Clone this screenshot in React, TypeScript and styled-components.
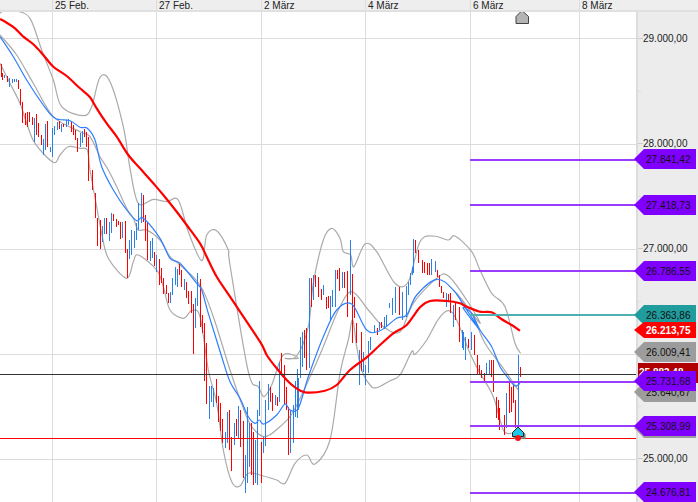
import * as React from 'react'
import styled, { createGlobalStyle } from 'styled-components'

const GlobalStyle = createGlobalStyle`
  html, body {
    margin: 0;
    background: #fff;
    overflow: hidden;
  }
`

const SPage = styled.div`
  width: 698px;
  height: 502px;
  display: flex;
  flex-direction: column;
  overflow: hidden;
  font-family: 'Liberation Sans', Arial, sans-serif;
  font-size: 10px;
  color: #222;
`
const SDateBar = styled.div`
  height: 10px;
  flex: none;
  display: flex;
  padding-left: 52px;
  background: #eee;
  border-bottom: 2px solid #e0e0e0;
  overflow: hidden;
`
const SDate = styled.div<{ $width: number }>`
  width: ${(p) => p.$width}px;
  flex: none;
  box-sizing: border-box;
  padding-left: 2px;
  line-height: 11px;
  border-left: 1px solid #ddd;
  white-space: nowrap;
`
const SBody = styled.div`
  flex: 1;
  display: flex;
  min-height: 0;
`
const SPlot = styled.div`
  width: 636px;
  flex: none;
`
const SChart = styled.svg`
  display: block;
`
const SAxis = styled.div`
  position: relative;
  flex: 1;
  box-sizing: border-box;
  padding-top: 22px;
  background: #ececec;
  border-left: 2px solid #dcdcdc;
`
const SAxisRow = styled.div`
  position: relative;
  height: 105px;
  padding-left: 5px;
  line-height: 10px;
  &::before {
    content: '';
    position: absolute;
    left: 0;
    top: 4px;
    width: 5px;
    height: 1px;
    background: #ccc;
  }
  &::after {
    content: '';
    position: absolute;
    left: 0;
    top: 57px;
    width: 3px;
    height: 1px;
    background: #ddd;
  }
`
const STag = styled.div<{ $top: number; $height: number; $bg: string; $light?: boolean }>`
  position: absolute;
  right: 2px;
  top: ${(p) => p.$top}px;
  width: 62px;
  height: ${(p) => p.$height}px;
  line-height: ${(p) => p.$height + 1}px;
  box-sizing: border-box;
  padding-left: 12px;
  background: ${(p) => p.$bg};
  clip-path: polygon(0 50%, 10px 0, 100% 0, 100% 100%, 10px 100%);
  color: ${(p) => (p.$light ? '#fff' : '#111')};
  font-weight: ${(p) => (p.$light ? 'bold' : 'normal')};
  white-space: nowrap;
`
const SCurrent = styled.div`
  position: absolute;
  left: 0;
  right: 0;
  top: 351px;
  height: 20px;
  line-height: 20px;
  padding-left: 1px;
  background: #b00000;
  color: #fff;
  font-weight: bold;
  white-space: nowrap;
`

// traced from the picture at 3x, so every series says which crop origin it uses
type Crop = [number, number, string]

const toPoints = ([ox, oy, s]: Crop) =>
  s
    .trim()
    .split(/\s+/)
    .map((p) => {
      const [x, y] = p.split(',').map(Number)
      return [x / 3 + ox, y / 3 + oy]
    })

const smooth = (crops: Crop[]) => {
  const pts = crops.flatMap(toPoints)
  let d = `M${pts[0][0]},${pts[0][1]}`
  for (let i = 0; i < pts.length - 1; i++) {
    const a = pts[Math.max(i - 1, 0)]
    const b = pts[i]
    const c = pts[i + 1]
    const e = pts[Math.min(i + 2, pts.length - 1)]
    const c1 = [b[0] + (c[0] - a[0]) / 6, b[1] + (c[1] - a[1]) / 6]
    const c2 = [c[0] - (e[0] - b[0]) / 6, c[1] - (e[1] - b[1]) / 6]
    d += `C${c1[0].toFixed(1)},${c1[1].toFixed(1)} ${c2[0].toFixed(1)},${c2[1].toFixed(1)} ${c[0].toFixed(1)},${c[1].toFixed(1)}`
  }
  return d
}

const barCrops: Crop[] = [
  [0, 0, 'r2,192,232 r7,218,240 b13,225,235 r20,228,245 b27,235,262 b35,238,248 b42,238,247 b49,236,245 r55,240,268 r61,268,315 r67,306,370 r74,340,375 r80,335,382 r88,335,365 r96,350,375 b103,355,425 r109,342,405 r115,370,410 r124,405,435 b130,418,465 b136,372,450 r142,362,440 b149,440,455 b155,385,472 b163,378,405 b171,365,390 r177,362,388 b183,372,395 r190,372,382 b199,360,380 b205,357,375 r212,362,395 r219,375,405 r226,390,420 r232,415,455 b240,400,440 b246,392,428 r253,388,410 r259,395,442 r265,410,510'],
  [0, 170, 'r265,0,33 r275,0,60 r286,70,145 r292,145,228 r301,150,237 b307,168,215 b313,145,192 r319,145,192 b328,157,212 b334,130,190 r340,133,152 r349,148,170 r355,153,165 r361,155,207 b367,157,205 r376,153,248 r382,238,325 b388,210,267 b394,180,255 b403,182,233 b409,160,210 b415,100,180 b424,70,158 r430,75,155 r436,135,212 r442,155,270 b451,212,272 b457,205,263 r463,245,287 b469,255,305 r478,267,345 r484,295,340 r490,325,372 r499,345,372 r505,370,398 b511,365,400 b517,325,375 b526,292,345 b532,297,350 r538,282,315 r544,300,350 b553,328,360 r559,337,383 r565,362,402 r574,363,430 r580,403,510 b586,385,475 b592,310,408 r601,327,470 r607,435,490 r613,460,510'],
  [180, 330, 'r40,0,72 r73,0,152 r79,40,222 b88,168,267 b94,168,215 b100,175,230 r109,148,220 r115,198,275 r121,218,302 r127,268,338 b136,305,355 b142,245,340 r148,240,360 r154,322,423 b163,278,345 r169,268,318 b175,228,325 r181,240,350 r190,272,445 b196,375,488 b202,232,458 b208,278,410 r214,280,435 r220,305,465 b226,330,458 b232,240,465 b238,153,258 r244,335,458 b250,320,370 b256,210,348 b265,162,240 r271,170,215 r277,190,242 b286,195,225 r292,200,228 b298,95,215 r304,70,130 r313,105,222 r319,170,240 r325,230,375 b331,240,370 b340,225,340 b346,153,260 b352,118,265'],
  [280, 220, 'b55,475,570 b61,350,475 b67,335,440 r73,330,415 r79,325,450 b88,175,445 r94,175,260 b100,165,240 r106,165,200 r115,172,230 r122,207,240 b128,195,225 r137,232,268 r143,228,265 b149,228,302 b155,210,260 b164,150,262 r170,150,178 r176,145,212 b185,155,205 r191,155,205 r201,152,292 b211,60,225 r217,162,370 r223,230,295 r229,310,370 b238,390,495 r244,335,453 b250,395,455 b256,435,495 b265,362,460 b271,352,390 b283,315,340 r292,325,345 b298,305,330 r304,305,325 b313,290,328 b319,285,320 b328,248,265 b337,235,285 b346,200,280 r358,200,285 b367,215,300 b379,198,290 b385,185,225 b391,160,195 b397,140,165 b400,58,160 r406,60,100 r415,90,130 r425,120,160 r431,125,160 r440,130,165 r446,130,165 b452,118,165 b464,122,155 r470,150,170 r476,165,200 r482,198,220'],
  [440, 280, 'r10,35,55 b17,40,80 r24,42,65 r29,40,100 b38,75,140 r46,70,120 r56,80,185 b65,150,205 b70,155,210 b76,170,240 r85,178,205 b93,155,210 r102,165,225 r112,225,285 r118,255,285 r124,270,295 r133,280,305 b139,250,285 b148,240,285 r154,240,290 r160,240,335 r167,350,415 r173,360,420 r178,385,450 r192,405,465 b199,340,445 r208,310,400 r214,320,395 r220,315,370 r226,360,445 b235,225,445 r241,260,292'],
]

const bars = barCrops.flatMap(([ox, oy, s]) =>
  s.split(' ').map((t) => {
    const [x, y1, y2] = t.slice(1).split(',').map(Number)
    return { color: t[0] === 'r' ? '#ff0000' : '#2a80e4', x: Math.round(x / 3 + ox) + 0.5, y1: y1 / 3 + oy, y2: y2 / 3 + oy }
  })
)

const redAverage = smooth([
  [0, 0, '0,57 20,68 45,85 70,110 100,133 130,165 160,200 200,228 240,265 270,292 290,325 320,370 350,410 385,465 420,505'],
  [0, 170, '460,40 490,75 530,125 560,165 600,220 620,260 650,320 690,380'],
  [180, 330, '240,35 260,75 290,115 320,150 345,172 375,187 435,182 470,165 510,120'],
  [280, 220, '260,412 300,375 340,340 380,315 420,262 450,243 500,243 540,250'],
  [440, 280, '80,80 120,95 155,97 185,118 215,135 240,152'],
])
const blueAverage = smooth([
  [0, 0, '0,110 40,170 80,240 130,315 165,355 210,362 240,382 262,385 285,420 305,500'],
  [0, 170, '340,60 380,120 410,152 430,145 480,205 510,265 540,280 590,340 605,360 625,430'],
  [180, 330, '125,80 150,155 180,205 205,260 225,280 238,270 252,282 290,255 315,222 330,240 355,235'],
  [280, 220, '85,470 130,350 170,270 215,252 260,330 300,332 350,295 380,285 410,225 470,178 520,210 560,270 600,330'],
  [440, 280, '70,85 95,100 120,150 155,200 180,260 205,295 225,318 240,310'],
])
const bandUpper = smooth([
  [0, 0, '0,40 15,30 50,33 90,55 125,150 160,240 185,320 250,347 275,320 300,232 330,245 370,380 390,505'],
  [0, 170, '415,100 460,88 500,95 535,90 565,185 605,272 620,195 650,182 685,240 690,285'],
  [180, 330, '205,125 235,170 252,200 275,165 310,75 355,85'],
  [280, 220, '15,415 50,408 85,320 100,190 130,60 155,25 180,55 190,95 212,105 222,140 255,72 290,95 345,190 385,185 420,65 460,48 505,60 525,48 575,95 600,150'],
  [440, 280, '155,40 195,80 225,190 242,220'],
])
const bandMiddle = smooth([
  [0, 0, '0,105 50,165 100,250 160,350 240,395 270,410 300,470 325,510'],
  [0, 170, '350,50 380,115 400,145 415,180 440,180 480,210 510,260 540,285 600,345 640,440'],
  [180, 330, '150,120 190,235 215,290 255,320 300,290 340,245'],
  [280, 220, '95,460 130,380 175,270 215,215 265,270 310,320 360,335 400,250 470,175 505,168 560,240 600,310'],
  [440, 280, '50,40 95,100 135,190 190,265 235,330'],
])
const bandLower = smooth([
  [0, 0, '0,190 30,250 60,310 80,370 105,430 160,487 180,465 205,440 240,445 262,450 270,510'],
  [0, 170, '290,110 305,190 325,265 380,325 400,275 415,255 470,300 490,350 510,420 550,445 575,422 600,440'],
  [180, 330, '85,120 110,220 130,360 155,455 180,468 205,430 250,438 290,450 315,460 345,400 380,375 405,402 450,330 480,130'],
  [280, 220, '205,360 218,300 230,380 245,450 270,495 290,503 330,482 360,465 395,395 405,403 440,360 475,298 505,272 530,300 570,400 600,460'],
  [460, 300, '60,220 100,290 130,390 155,400'],
])

const dates = [
  { label: '25 Feb.', width: 104 },
  { label: '27 Feb.', width: 105 },
  { label: '2 März', width: 104 },
  { label: '4 März', width: 105 },
  { label: '6 März', width: 109 },
  { label: '8 März', width: 119 },
]
const gridX = [52, 156, 261, 365, 470, 579]
const gridY = [38, 144, 249, 354, 459]
const levels = [
  { y: 160, color: '#9a3cff' },
  { y: 205, color: '#9a3cff' },
  { y: 271, color: '#9a3cff' },
  { y: 315, color: '#50b0b0' },
  { y: 382, color: '#9a3cff' },
  { y: 426, color: '#9a3cff' },
  { y: 493, color: '#9a3cff' },
]
const scale = ['29.000,00', '28.000,00', '27.000,00', '26.000,00', '25.000,00']
const tags = [
  { label: '27.841,42', top: 137, height: 20, bg: '#8000ff' },
  { label: '27.418,73', top: 183, height: 20, bg: '#8000ff' },
  { label: '26.786,55', top: 249, height: 20, bg: '#8000ff' },
  { label: '26.363,86', top: 293, height: 20, bg: '#209c9c' },
  { label: '26.213,75', top: 310, height: 16, bg: '#ff0000', light: true },
  { label: '26.009,41', top: 330, height: 20, bg: '#9c9c9c' },
]
const lowerTags = [
  { label: '25.640,67', top: 370, height: 20, bg: '#9c9c9c' },
  { label: '25.731,68', top: 359, height: 20, bg: '#8000ff' },
  { label: '', top: 406, height: 20, bg: '#9c9c9c' },
  { label: '25.308,99', top: 404, height: 20, bg: '#8000ff' },
  { label: '24.676,81', top: 470, height: 20, bg: '#8000ff' },
]

const PriceChart = () => (
  <SChart width={636} height={490} viewBox="0 12 636 490">
    <g shapeRendering="crispEdges" strokeWidth={1}>
      {gridX.map((x) => (
        <line key={x} x1={x + 0.5} x2={x + 0.5} y1={12} y2={502} stroke="#dcdcdc" />
      ))}
      {gridY.map((y) => (
        <line key={y} x1={0} x2={636} y1={y + 0.5} y2={y + 0.5} stroke="#dcdcdc" />
      ))}
    </g>
    <g fill="none" stroke="#aaaaaa" strokeWidth={1.2}>
      <path d={bandUpper} />
      <path d={bandMiddle} />
      <path d={bandLower} />
    </g>
    <g shapeRendering="crispEdges" strokeWidth={1}>
      {bars.map((b, i) => (
        <line key={i} x1={b.x} x2={b.x} y1={b.y1} y2={b.y2} stroke={b.color} />
      ))}
    </g>
    <path d={blueAverage} fill="none" stroke="#2f7fff" strokeWidth={1.2} />
    <path d={redAverage} fill="none" stroke="#ff0000" strokeWidth={2.2} />
    <g shapeRendering="crispEdges">
      <line x1={0} x2={636} y1={374.5} y2={374.5} stroke="#333" />
      <line x1={0} x2={636} y1={438.5} y2={438.5} stroke="#ff0000" />
      {levels.map((l) => (
        <line key={l.y} x1={470} x2={636} y1={l.y} y2={l.y} stroke={l.color} strokeWidth={2} />
      ))}
    </g>
    <path d="M522 10.5 L528.5 16.5 V23.5 H516 V16.5 Z" fill="#b4b4b4" stroke="#444" />
    <path d="M518.5 427.5 L524 433 V437.5 H513 V433 Z" fill="#9a9a9a" stroke="#777" transform="translate(1 1)" />
    <path d="M518 427 L523.5 432.5 V436.5 H512.5 V432.5 Z" fill="#1cc8ea" stroke="#222" />
    <circle cx={518} cy={438} r={3} fill="#ff1010" />
  </SChart>
)

const App = () => (
  <SPage>
    <GlobalStyle />
    <SDateBar>
      {dates.map((d) => (
        <SDate key={d.label} $width={d.width}>
          {d.label}
        </SDate>
      ))}
    </SDateBar>
    <SBody>
      <SPlot>
        <PriceChart />
      </SPlot>
      <SAxis>
        {scale.map((s) => (
          <SAxisRow key={s}>{s}</SAxisRow>
        ))}
        {tags.map((t) => (
          <STag key={t.label} $top={t.top} $height={t.height} $bg={t.bg} $light={t.light}>
            {t.label}
          </STag>
        ))}
        <SCurrent>25.883,48</SCurrent>
        {lowerTags.map((t) => (
          <STag key={t.top} $top={t.top} $height={t.height} $bg={t.bg}>
            {t.label}
          </STag>
        ))}
      </SAxis>
    </SBody>
  </SPage>
)

export default App
